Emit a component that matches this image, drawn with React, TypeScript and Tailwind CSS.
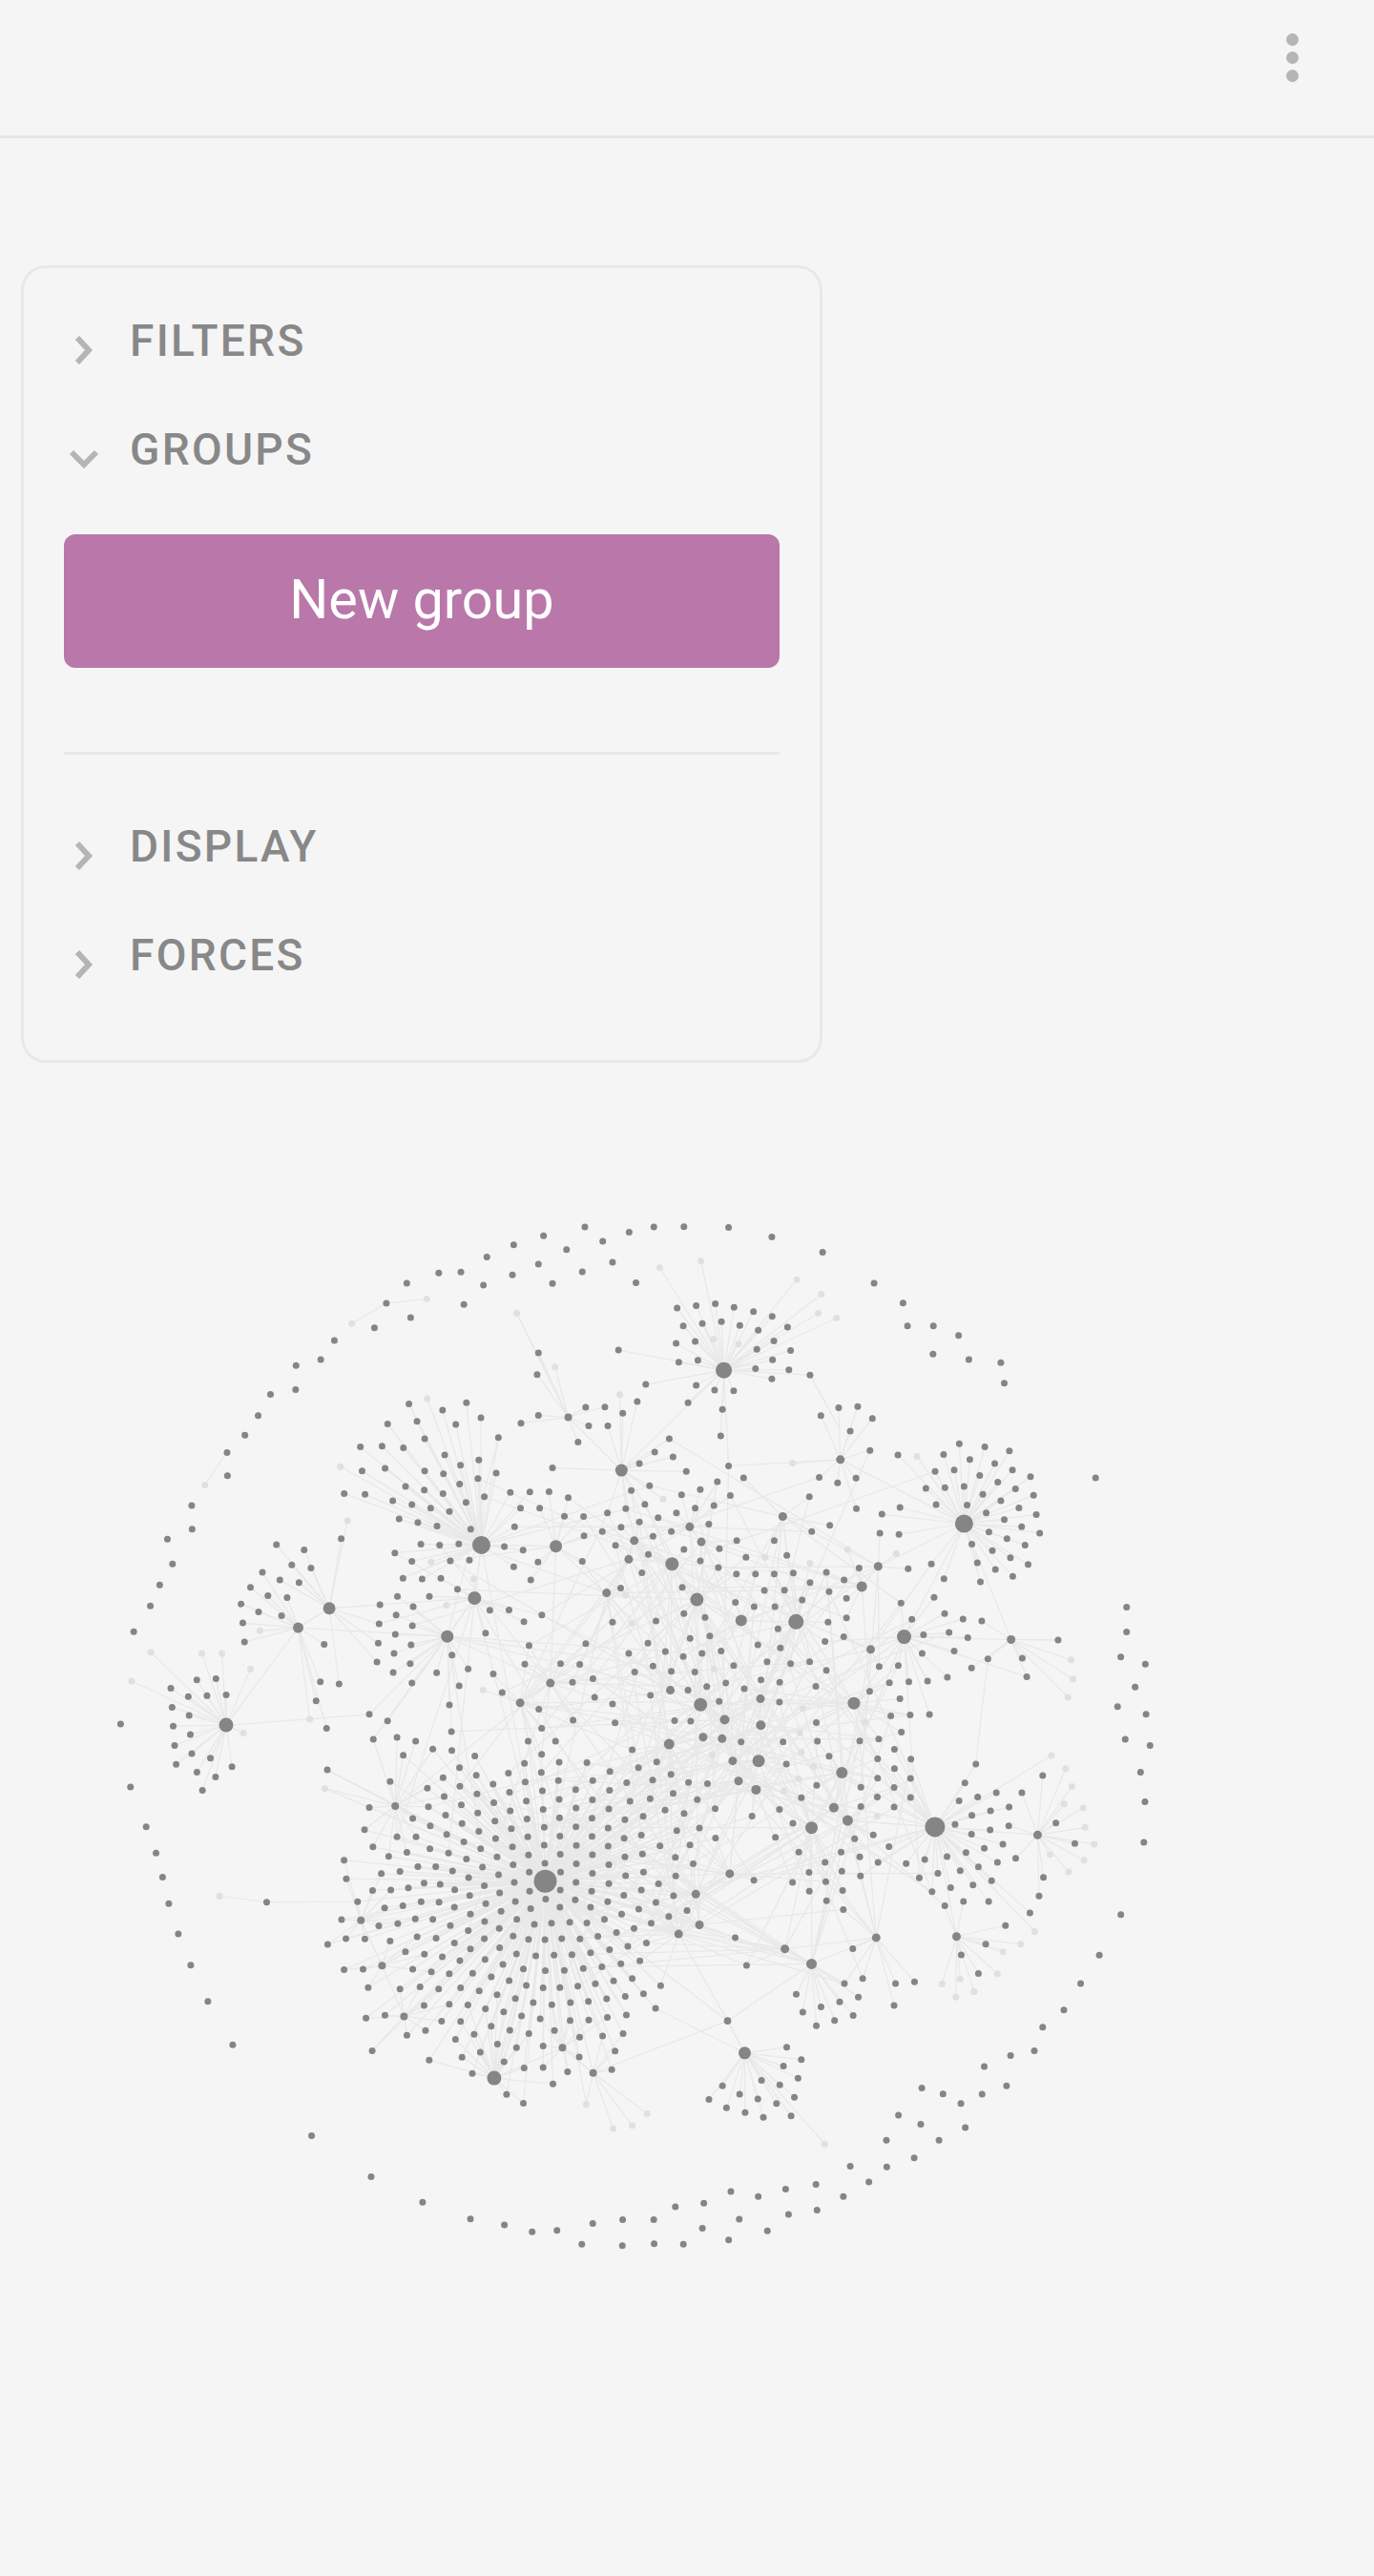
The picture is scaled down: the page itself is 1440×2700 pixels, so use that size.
import React from "react";

type N = { x: number; y: number; r: number; light: boolean; ring: boolean };

const parse = (s: string) =>
  s.trim().split(/\s+/).map((t) => t.split(",").map(Number));

const A_RING = "1149,87 1253,100 1311,87 1382,86 1052,109 1191,123 1106,144 982,132 919,163 1040,181 1214,176 858,201 806,203 979,208 911,234 1073,230 1143,200 1269,228 731,229 683,280 865,283 740,316 655,342 561,374 529,422 471,437 470,498 411,510 382,564 351,613 309,657 310,716 226,791 227,851 169,876 181,939 151,992 129,1045 90,1110 59,1343 82,1503";
const A_LIGHT = "1325,190 989,305 1079,441 130,1162 250,1165 297,1165 364,1204 85,1235 347,1366 503,1330 386,1108 575,693 592,829 779,521 1231,511 788,934 888,977 824,1043 1244,1018 1259,1089 910,1258 1333,775";
const A_RING_LIGHT = "778,269 602,331 257,739";
const A_DARK = "307,1347,7.5 177,1253 238,1232 283,1229 218,1274 262,1272 307,1270 180,1301 220,1322 183,1349 223,1370 186,1397 226,1418 270,1431 189,1445 238,1465 282,1477 320,1451 251,1512 549,1051,6.5 476,1100,5.5 425,890 490,903 461,941 506,949 392,960 433,979 478,986 364,998 405,1019 450,1024 342,1040 383,1060 437,1070 346,1088 350,1136 906,891,9.5 890,1025,7 826,1122,6.5 736,534 815,550 871,531 905,569 686,585 755,578 846,586 773,622 946,619 622,643 673,641 723,645 820,663 900,676 857,689 626,704 680,697 773,704 817,711 898,723 941,709 728,743 772,752 816,761 855,737 584,761 633,763 698,779 743,789 787,798 831,806 870,783 913,769 713,825 757,834 802,843 881,851 577,875 764,889 808,891 853,888 703,911 743,932 833,931 878,929 722,975 767,977 811,975 850,1003 784,1021 709,1021 668,1042 746,1047 706,1068 666,1090 744,1095 704,1117 664,1139 741,1143 701,1165 661,1187 739,1191 699,1213 801,1214 537,1142 926,1056 971,1055 1006,1085 1048,1068 916,1114 837,1169 875,1204 934,1217 854,1247 955,1264 1018,1145 1008,1192 1092,1191 1137,1193 1168,1229 1120,1238 1172,1276 1214,1293 1219,1340 1121,1334 1041,1306 997,1290,4.5 1068,1240,4.5 960,895 1004,904 982,946 1039,934 1022,979 1081,894,6.5 974,758 1020,757 1065,756 1110,771 998,798 1043,798 1101,818 1146,819 984,845 1147,868 1143,932 1235,702,6.5 999,583 1040,563 1110,568,4 1151,543 1196,542 1238,558 1158,590 1203,590 1133,631 1073,696 1040,405 1037,460 1228,398 1292,485 1272,528 1277,685 1313,656 1345,622 1258,753 1290,788 1245,799 1202,810 1190,857 1234,846 1277,833 1321,822 1301,741 1265,880,4.5 1221,892 1309,869 1298,915 1252,927,4.5 1283,961 1200,1012,4.5 1214,1086 1316,1083 1297,1139 1338,1160 1252,1165 1309,1197 1266,1212 1151,1140 1303,1271 528,1237 572,1242 743,1240 518,1285 643,1319 685,1335 831,1295 1366,292 1370,429 1362,381 1345,729 1347,1033 1233,1000";

const B_RING = "47,86 178,88 305,112 454,151 605,229 690,279 703,337 779,337 853,361 778,408 883,422 977,430 987,482 1255,721 1346,1048 1346,1111 1329,1174 1401,1192 1371,1250 1320,1299 1403,1318 1342,1382 1414,1398 1387,1465 1400,1541";
const B_LIGHT = "97,173 378,220 450,257 441,305 495,317 134,370 207,383 366,684 731,667 527,902 670,913 285,922 417,937 1183,1181 1189,1230 1174,1276 135,1204";
const B_DARK = "164,449,8.5 27,292 83,286 139,281 194,290 251,301 306,313 45,337 101,331 157,326 211,336 265,348 351,340 24,381 80,376 311,375 261,396 360,399 32,429 88,424 307,423 257,445 355,448 305,471 417,461 83,487 137,499 193,501 59,531 160,548 155,615 506,675,4.5 449,564 501,544 557,541 600,571 535,603 593,652 675,663 178,691 54,705 15,668 4,622 222,721 145,731 95,751 40,764 183,766 135,791 80,798 25,810 120,838 64,845,4.5 10,857 98,883,4.5 47,902 151,900 202,880 95,931 148,948 229,922 201,964 257,964 312,964 368,962 312,880 349,917 337,819,4.5 415,769 444,720 498,734 552,722 553,799 475,841 422,857 628,813 681,796 622,861 678,864 617,945,4.5 561,949 465,960 517,979 417,986 569,996,5.5 705,951 773,939 810,976 342,1005 283,1006 473,1009 394,1030 524,1026 198,1036 253,1047 314,1047 684,1038 781,1023 716,1079 812,1064 866,1078 921,1083 524,1075 470,1086 323,1103 109,1074 47,1064 42,998 12,939,7 85,1029,7 215,1082,6 376,1085,8 693,1123,7.5 750,1118 825,1112 880,1125 1007,1130,4.5 1145,1131 516,1123 461,1135 595,1155,4.5 264,1143 330,1151 65,1127 123,1121 156,1159 100,1165 45,1173 746,1165 840,1159 939,1179 1040,1177 1053,1224 891,1202 820,1225 291,1186 360,1191 416,1186 465,1208 193,1196 620,1198 676,1196 79,1212 10,1210 273,1232 328,1238 170,1240 114,1249 224,1254 59,1258 434,1248 7,1258,4.5 707,1237 762,1235 650,1239 592,1261 869,837,9.5 855,635 930,643 1002,653 809,662 886,675 959,685 1011,701 1064,718 784,705 840,701 915,715 968,732 757,748 813,746 869,743 924,763 1020,749 1073,765 787,789 878,790 977,779 1030,797 934,810 987,827 1081,814 1038,845 942,858 1091,861 995,875 892,889 1048,891 952,905 1005,923 908,936 1057,940 961,953 1012,970 917,984";

const C_RING = "96,191 139,300 166,372 184,438 201,510 227,593 261,679 308,778 376,897 592,1146 755,1258 896,1328 1027,1374 1120,1390 1196,1409 1264,1405 1362,1386 1444,1376 1529,1376 1332,1443 1443,1447 1530,1442 69,18 469,506 340,490";
const C_LIGHT = "628,195 587,5 405,43 1344,1060 1418,1126 1470,1118 1511,1086";
const C_DARK = "358,21,7.5 213,24 260,47 217,77 264,99 315,112 221,129 278,150 329,163 374,135 293,200 633,30 635,144 807,176 761,60 826,55 877,65 924,87 976,91 975,39 843,104 800,10 1039,106 1175,126 1222,101 1222,30 1185,65 1260,65 1308,8 1423,15 1470,89 1346,124 1270,123 997,138 1131,153 1221,151 1043,159 952,165 909,194 1089,183 1177,177 1268,173 1362,173 1409,148 1487,138 1537,122 998,189 1134,205 1224,201 1045,210 1315,198 1408,200 1455,179 1526,172 955,217 1091,234 1180,229 1270,225 1361,226 1464,230 1519,223 750,247 821,243,4 912,245 1002,240 1136,256 1226,252 1316,248 1406,251 1560,254 1047,262 959,268 869,277 1094,284 1182,278 1271,275 1360,276 1450,280 1500,271 737,308 917,297 1004,291 1139,305 1229,301 1316,300 1404,303 1050,312 1495,323 1448,331 826,327 878,327 962,321 1096,332 1184,327 1272,325 1360,326 1009,341 1142,355 1229,350 1317,351 1404,353 1546,352 760,355 853,370 916,360 1055,360 967,372 1186,377 1273,375 1361,376 1450,382 1498,374 803,381 1100,382 1016,388 681,391 883,409 932,409 1060,410 1144,404 1231,400 1317,401 1406,404 978,421 783,428 834,422 1104,431 1188,424 1274,424 1361,427 1452,434 1501,424 1022,439 687,442 1147,452 1316,452 1406,455 1542,456 900,454 944,457 1065,461 857,467 984,472 759,474 809,473 1189,476 1273,473 1359,476 1495,473 1107,481 1025,488 1447,487 718,505 892,505 941,506 1150,504 1233,498 1314,500 1403,505 1535,507 1069,510 983,520 792,522 842,516 1192,524 1272,520 1356,520 1488,525 1111,531 1027,539 1441,539 674,554 727,556,4 876,552 924,553 1154,553 1066,559 1202,567 1249,564 1299,561 1346,563 1394,553 1522,564 1568,545 776,571 828,565 972,570 1106,578 1021,584 1475,578 1427,589 881,601 1144,599 1376,600 636,622 686,606 738,607 933,605 1065,606 1186,608 1231,609 1277,606 1327,607 1509,618 807,613 983,618 1107,631 1027,634 1458,627 1408,636 849,642 901,649 1153,648 1356,645 1206,653 1256,651 1305,650 950,656 1067,663 998,666 1491,667 1439,675 869,690 681,691 733,690 785,680,4 920,697 1116,677 1172,689 1232,694 1284,693 1336,688 1387,683 969,702 1033,701 1084,711 1470,715 1419,722 1133,721 1180,734 1226,741 1272,740 1321,736 1369,730 747,740 834,744 889,738 940,744 1000,741 1051,749 1100,760 1548,735 1451,764 1501,757 1150,770 1199,781 1250,787 1301,781 1350,778 1400,771 900,789 969,786 1020,788 1068,798 1118,807 1534,797 741,824 793,816 845,819,4 948,832 1000,833 1167,818 1218,826 1300,830 1351,829 1402,822 1454,815 1084,846 904,858 853,871 1037,868 1135,857 1187,866 1257,858 1326,876 1389,873 1445,866 986,882 1101,895 1153,905 1226,900 1279,905,4 758,913 1054,917 1423,914 914,939 1004,931 1119,943 1325,930 1032,975 1174,960 1226,959 1293,971 1363,974,4 1414,965 1126,1033 1172,1057 1253,1004 1232,449,12 1092,988,7.5";

const D_RING = "1371,671 1312,782 1261,860 1215,932 1157,979 1134,1044 1069,1057 997,1087 1058,1140 991,1163 933,1188 884,1162 826,1146 762,1220 823,1245 945,1254 873,1289 729,1289 805,1337 730,1362 630,1360 681,1403 611,1443 536,1410 453,1423 378,1443 303,1429 229,1461 151,1471 92,1506 326,1505 461,1492 539,1480 403,1537 225,1530 297,1562 1362,101 1440,122 1383,191 1451,208 1425,281 1437,362 1434,473";
const D_LIGHT = "1181,235 1220,271 1237,320 1216,368 1268,379 1273,432 1298,478 1177,506 1270,522 1228,554 1135,717 1097,752 1048,773 1033,833 881,861 931,847 969,882 919,897 704,401 670,144 500,106 484,57 492,173 496,226 529,266 488,299 448,332 252,233 560,1299 1225,76 1241,25";
const D_DARK = "862,431,10.5 928,359 979,349 1030,337 1100,337 1157,290 963,399 1014,387 1065,376 917,424 962,451 1013,439 1064,428 1193,420 1143,453,4.5 997,489 1048,478 1245,476 947,501 1083,517 895,512 1033,528 981,540 931,551 870,558 834,520 783,531 819,570 1017,578 966,590 905,597 854,608 1159,569 1147,620 1009,635 940,635 889,647 1122,666 1055,701 921,731,4.5 1001,752 934,781 981,832 944,310 974,259 524,433,6.5 473,421 425,459 489,500 561,528 605,500 656,513 706,528 607,552 517,555 472,583 563,581 658,565 518,607 609,605 565,633 611,657 585,378,5 623,413,5.5 642,463 693,453 736,485 659,375 704,349 750,376 750,323 705,297 659,322 795,350 795,298 751,271 705,244 796,245 751,218 708,190 656,195 770,171 741,127 794,124 847,123 766,80 818,77 683,60 737,36 790,34 842,31 896,21 572,237 538,317 496,351 436,383 361,401 1115,19 607,282,6 640,92,6.5 701,734,4.5 754,860 806,855 750,920 637,764 451,765,4.5 315,734 346,810 482,889 524,806,5.5 614,860 664,846 652,897 601,910 550,924 500,938 537,975 587,961 638,947 294,962,3.8 341,1050,6.5 456,1034 496,1068 447,1086 487,1119 280,1140 387,1125 437,1137 243,1177 327,1163 377,1176 477,1171 428,1188 291,1200 342,1213 392,1226 468,1222 300,559,4.5 366,577 207,615,4.5 217,699,4.5 160,724,4.5 183,660 133,676 146,619 152,565 200,532 191,480 151,514 155,441 217,434 261,461 260,381 175,394 145,339 211,356 187,309 239,312 139,287 220,96,7 134,204,5.5 379,250,6.5 324,305,4.5 372,329,5 279,189,4.5 227,185,4.5 308,250,4.5 286,137,5 385,152,5 384,80,4.5 134,57,4.5 186,56 238,46 289,37 339,52 385,28 437,36 536,46 271,87 436,89 193,141 537,145 331,198 446,198 540,196 455,259 149,140";
const E_RING = "725,757";

const nodes: N[] = [];
const add = (s: string, fx: (x: number) => number, fy: (y: number) => number, keep: (x: number, y: number) => boolean, light: boolean, ring: boolean) => {
  for (const p of parse(s)) {
    const x = fx(p[0]);
    const y = fy(p[1]);
    if (!keep(x, y)) continue;
    const r = p[2] ?? 3.5;
    const dup = nodes.find((n) => Math.hypot(n.x - x, n.y - y) < 7);
    if (dup) {
      dup.r = Math.max(dup.r, r);
      continue;
    }
    nodes.push({ x, y, r, light, ring });
  }
};

const ax = (x: number) => 100 + x / 2.24;
const ay = (y: number) => 1250 + y / 2.412;
const bx = (x: number) => 700 + x / 2.8;
const cx = (x: number) => 100 + x / 2.613;
const cy = (y: number) => 1800 + y / 2.613;
const dx = (x: number) => 650 + x / 2.613;
const dy = (y: number) => 1750 + y / 2.613;
const inA = (x: number, y: number) => x < 700 && y < 1800;
const inB = (x: number, y: number) => x >= 700 && y < 1780;
const inC = (x: number, y: number) => x < 700 && y >= 1800;
const inD = (x: number, y: number) => x >= 700 && y >= 1780;

add(C_DARK, cx, cy, inC, false, false);
add(D_DARK, dx, dy, inD, false, false);
add(A_DARK, ax, ay, inA, false, false);
add(B_DARK, bx, ay, inB, false, false);
add(C_RING, cx, cy, inC, false, true);
add(D_RING, dx, dy, inD, false, true);
add(A_RING, ax, ay, inA, false, true);
add(B_RING, bx, ay, inB, false, true);
add(E_RING, (x) => 300 + x / 1.742, (y) => 2100 + y / 3, () => true, false, true);
add(A_RING_LIGHT, ax, ay, inA, true, true);
add(C_LIGHT, cx, cy, inC, true, false);
add(D_LIGHT, dx, dy, inD, true, false);
add(A_LIGHT, ax, ay, inA, true, false);
add(B_LIGHT, bx, ay, inB, true, false);
for (const n of nodes) {
  if (Math.abs(n.x - (100 + 340 / 2.613)) < 3 && Math.abs(n.y - (1800 + 490 / 2.613)) < 3) n.light = true;
}

const makeEdges = () => {
  const out: [number, number, number, number][] = [];
  const anchors = nodes.filter((n) => n.r >= 3.8 && !n.light);
  let seed = 20240611;
  const rnd = () => {
    seed = (seed + 0x6d2b79f5) | 0;
    let t = Math.imul(seed ^ (seed >>> 15), 1 | seed);
    t = (t + Math.imul(t ^ (t >>> 7), 61 | t)) ^ t;
    return ((t ^ (t >>> 14)) >>> 0) / 4294967296;
  };
  const center = anchors.find((n) => n.r === 12)!;
  for (const n of nodes) {
    if (n.ring) continue;
    let best: N | null = null;
    let score = Infinity;
    for (const a of anchors) {
      if (a === n) continue;
      if (a.x < 300 && n.x > 300) continue;
      const d = Math.hypot(a.x - n.x, a.y - n.y);
      const s = d / Math.pow(a.r, 0.8);
      if (s < score) {
        score = s;
        best = a;
      }
    }
    if (best && Math.hypot(best.x - n.x, best.y - n.y) < 190) out.push([n.x, n.y, best.x, best.y]);
    const toCenter = Math.hypot(n.x - center.x, n.y - center.y);
    if (toCenter < 262 && n.y > 1830 && !(n.x > 790)) {
      out.push([n.x, n.y, center.x, center.y]);
    }
  }
  const core = nodes.filter(
    (n) => !n.ring && !n.light && n.x > 380 && n.x < 1000 && n.y > 1500 && n.y < 2090,
  );
  const big = anchors.filter((n) => n.x > 440 && n.x < 990 && n.y > 1560 && n.y < 2080);
  for (let i = 0; i < 680; i++) {
    const a = big[Math.floor(rnd() * big.length)];
    const b = core[Math.floor(rnd() * core.length)];
    const d = Math.hypot(a.x - b.x, a.y - b.y);
    if (d > 50 && d < 300) out.push([a.x, a.y, b.x, b.y]);
  }
  const p = (x: number, y: number): [number, number] => [x, y];
  const manual: [[number, number], [number, number]][] = [
    [p(ax(683), ay(280)), p(ax(778), ay(269))],
    [p(ax(683), ay(280)), p(ax(602), ay(331))],
    [p(ax(309), ay(657)), p(ax(257), ay(739))],
    [p(ax(989), ay(305)), p(ax(1110), ay(568))],
    [p(cx(469), cy(506)), p(cx(340), cy(490))],
    [p(cx(469), cy(506)), p(cx(717), cy(505))],
    [p(ax(307), ay(1347)), p(ax(643), ay(1319))],
    [p(ax(476), ay(1100)), p(ax(826), ay(1122))],
    [p(ax(549), ay(1051)), p(ax(890), ay(1025))],
    [p(bx(1007), ay(1130)), p(bx(1145), ay(1131))],
    [p(bx(693), ay(1123)), p(bx(1007), ay(1130))],
    [p(bx(1007), ay(1130)), p(bx(1053), ay(1224))],
    [p(bx(1053), ay(1224)), p(bx(693), ay(1123))],
    [p(bx(939), ay(1179)), p(bx(903), ay(1444))],
    [p(bx(506), ay(675)), p(bx(178), ay(691))],
    [p(bx(417), ay(461)), p(bx(506), ay(600))],
    [p(dx(294), dy(962)), p(dx(341), dy(1050))],
    [p(dx(294), dy(962)), p(dx(160), dy(724))],
    [p(dx(524), dy(806)), p(dx(294), dy(962))],
    [p(dx(451), dy(765)), p(dx(160), dy(724))],
    [p(dx(294), dy(962)), p(cx(1363), cy(974))],
    [p(dx(701), dy(734)), p(dx(451), dy(765))],
    [p(dx(701), dy(734)), p(dx(623), dy(413))],
    [p(dx(524), dy(806)), p(dx(524), dy(433))],
    [p(dx(451), dy(765)), p(dx(524), dy(433))],
    [p(dx(611), dy(657)), p(dx(217), dy(699))],
    [p(dx(862), dy(431)), p(dx(623), dy(413))],
    [p(dx(862), dy(431)), p(dx(607), dy(282))],
    [p(bx(869), ay(837)), p(bx(617), ay(945))],
  ];
  for (const [a, b] of manual) out.push([a[0], a[1], b[0], b[1]]);
  return out;
};

const edges = makeEdges();

function Chevron({ down }: { down?: boolean }) {
  return (
    <svg viewBox="0 0 32 32" className="ml-[5px] mr-[32px] mt-5 h-8 w-8 shrink-0" fill="none" stroke="#b5b5b5" strokeWidth="6">
      {down ? <polyline points="3,9 16,22 29,9" /> : <polyline points="9,3 21,16 9,29" />}
    </svg>
  );
}

function Row({ label, down }: { label: string; down?: boolean }) {
  return (
    <div className="flex h-[114px] items-center">
      <Chevron down={down} />
      <span className="text-[46px] font-medium leading-none tracking-[2.3px] text-[#888888]">{label}</span>
    </div>
  );
}

export default function App() {
  return (
    <div className="min-h-[2700px] w-[1440px] overflow-hidden bg-[#f5f5f5] font-['Roboto',sans-serif]">
      <header className="flex h-[145px] items-start justify-end border-b-[3px] border-[#e6e6e6] pr-[79px] pt-[35px]">
        <div className="flex flex-col gap-[6px]">
          <span className="h-[13px] w-[13px] rounded-full bg-[#b5b5b5]" />
          <span className="h-[13px] w-[13px] rounded-full bg-[#b5b5b5]" />
          <span className="h-[13px] w-[13px] rounded-full bg-[#b5b5b5]" />
        </div>
      </header>
      <section className="ml-[22px] mt-[133px] h-[836px] w-[840px] rounded-[26px] border-[3px] border-[#e8e8e8] px-[42px] pt-[19px]">
        <Row label="FILTERS" />
        <Row label="GROUPS" down />
        <button className="mt-[32px] flex h-[140px] w-full items-center justify-center rounded-[12px] bg-[#b977aa] pb-[3px] text-[57.6px] leading-none text-white">
          New group
        </button>
        <div className="mt-[88px] h-[3px] bg-[#e8e8e8]" />
        <div className="mt-[39px]">
          <Row label="DISPLAY" />
          <Row label="FORCES" />
        </div>
      </section>
      <svg viewBox="0 1200 1440 1300" className="mt-[86px] block h-[1300px] w-[1440px]">
        <g stroke="#e8e8e8" strokeWidth="1.2" fill="none">
          {edges.map((e, i) => (
            <line key={i} x1={e[0]} y1={e[1]} x2={e[2]} y2={e[3]} />
          ))}
        </g>
        {nodes.map((n, i) => (
          <circle key={i} cx={n.x} cy={n.y} r={n.r} fill={n.light ? "#e0e0e0" : "#858585"} />
        ))}
      </svg>
    </div>
  );
}
